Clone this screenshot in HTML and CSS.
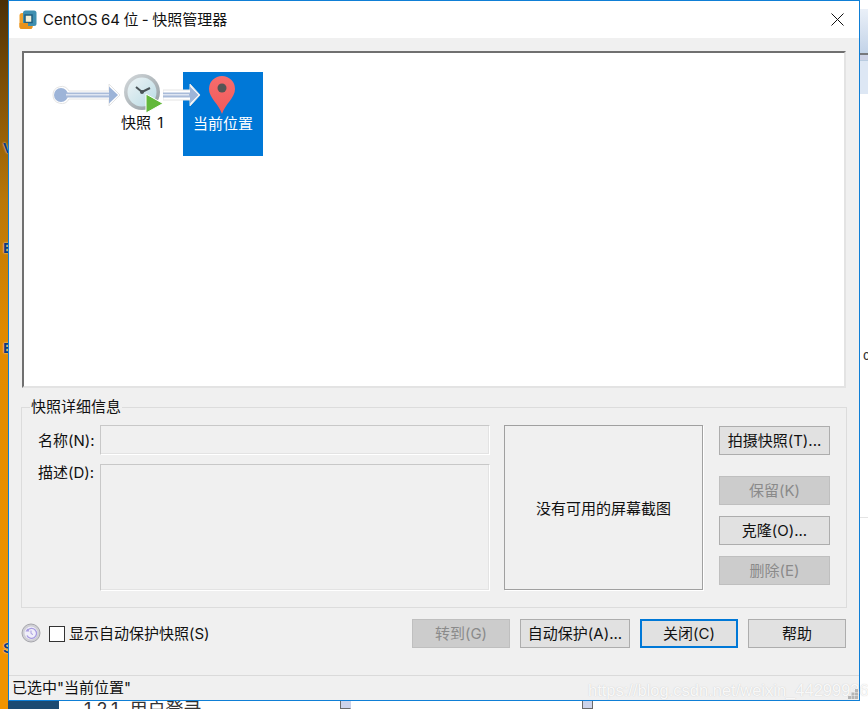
FILE: index.html
```html
<!DOCTYPE html>
<html lang="zh">
<head>
<meta charset="utf-8">
<title>CentOS 64 位 - 快照管理器</title>
<link rel="stylesheet" href="styles.css">
</head>
<body>
<div class="desk">
  <div class="desk-left">
    <span class="bg-letter l1">V</span><span class="bg-letter l2">E</span><span class="bg-letter l3">E</span><span class="bg-letter l4">S</span>
  </div>
  <div class="desk-right">
    <div class="tab"></div><div class="tab-line"></div><div class="tab-sub"></div>
    <span class="r-c">c</span><div class="r-line"></div>
  </div>
  <div class="desk-bottom">
    <div class="db-dark"></div>
    <div class="db-text">1.2.1 用户登录</div>
    <div class="db-bar a"></div><div class="db-bar b"></div>
  </div>

  <main class="win">
    <header class="titlebar">
      <svg class="logo" width="18" height="20" viewBox="0 0 18 20">
        <rect x="0.500" y="3" width="13" height="16" rx="2.500" fill="#f2a02a"/>
        <rect x="4" y="0.500" width="13.500" height="15.500" rx="2.500" fill="#3f8fb0"/>
        <rect x="6" y="5" width="7" height="7.500" fill="#f4f0d8" stroke="#1f5f80" stroke-width="1.500"/>
        <path d="M0.500 13H9v3h4.500v.5a2.500 2.500 0 0 1-2.500 2.500H3a2.500 2.500 0 0 1-2.500-2.500z" fill="#e8921c"/>
      </svg>
      <span class="title">CentOS 64 位 - 快照管理器</span>
      <svg class="close" width="13" height="13" viewBox="0 0 13 13"><path d="M.5.500l12 12M12.500.500l-12 12" stroke="#111" stroke-width="1" fill="none"/></svg>
    </header>
    <div class="body">
      <section class="tree">
        <div class="tree-row">
          <svg class="start-arrow" width="70" height="26" viewBox="0 0 70 26">
            <path d="M1 13a8.500 8.500 0 0 1 16-4h40V2l11 11-11 11v-7H17a8.500 8.500 0 0 1-16-4z" fill="#fff" stroke="#e4e4e4"/>
            <circle cx="9" cy="13" r="7" fill="#9db4d8"/>
            <rect x="14" y="10.500" width="46" height="5" fill="#a9bbd9"/>
            <rect x="14" y="12" width="44" height="1.500" fill="#dfe6f2"/>
            <path d="M57 4.500l9 8.500-9 8.500z" fill="#9db4d8"/>
          </svg>
          <div class="node">
            <svg class="clock" width="40" height="40" viewBox="0 0 40 40">
              <defs>
                <linearGradient id="cg" x1="0" y1="0" x2="1" y2="1"><stop offset="0" stop-color="#eef4f6"/><stop offset="1" stop-color="#b9dbe4"/></linearGradient>
                <linearGradient id="rg" x1="0" y1="0" x2="1" y2="1"><stop offset="0" stop-color="#d5dadd"/><stop offset="1" stop-color="#8f999e"/></linearGradient>
              </defs>
              <circle cx="18" cy="18" r="18" fill="url(#rg)"/>
              <circle cx="18" cy="18" r="14.500" fill="url(#cg)"/>
              <path d="M18 18l-6-5M18 18l8-4" stroke="#4a5357" stroke-width="2" fill="none"/>
              <circle cx="18" cy="18" r="2" fill="#4a5357"/>
              <path d="M22 20l17 9.500-17 9.500z" fill="#62b83a" stroke="#fff" stroke-width="1"/>
            </svg>
            <span class="node-label">快照 1</span>
          </div>
          <svg class="next-arrow" width="38" height="26" viewBox="0 0 38 26">
            <path d="M0 8h27V2l10 11-10 11v-6H0z" fill="#fff" stroke="#e4e4e4"/>
            <rect x="0" y="10.500" width="28" height="5" fill="#a9bbd9"/>
            <rect x="0" y="12" width="26" height="1.500" fill="#dfe6f2"/>
            <path d="M27 4.500l8.500 8.500-8.500 8.500z" fill="#9db4d8"/>
          </svg>
          <div class="current">
            <svg class="pin" width="28" height="38" viewBox="0 0 28 38">
              <defs><linearGradient id="pg" x1="0" y1="0" x2="0" y2="1"><stop offset="0" stop-color="#f76d6d"/><stop offset="1" stop-color="#f25a5a"/></linearGradient></defs>
              <path d="M14 38C11 28 1 22 1 13a13 13 0 0 1 26 0c0 9-10 15-13 25z" fill="url(#pg)"/>
              <circle cx="14" cy="12" r="4.500" fill="#555"/>
            </svg>
            <span class="current-label">当前位置</span>
          </div>
        </div>
      </section>

      <fieldset class="details">
        <legend class="legend">快照详细信息</legend>
        <div class="details-grid">
          <div class="fields">
            <div class="field-row"><span class="lbl lbl-name">名称(N):</span><div class="inp name"></div></div>
            <div class="field-row"><span class="lbl">描述(D):</span><div class="inp desc"></div></div>
          </div>
          <div class="shot">没有可用的屏幕截图</div>
          <div class="side">
            <button class="btn wide">拍摄快照(T)...</button>
            <button class="btn wide off gap-big">保留(K)</button>
            <button class="btn wide">克隆(O)...</button>
            <button class="btn wide off">删除(E)</button>
          </div>
        </div>
      </fieldset>

      <div class="foot">
        <svg class="restore" width="20" height="20" viewBox="0 0 20 20">
          <circle cx="10" cy="10" r="9" fill="#cfcfd4" stroke="#a6a6ac"/>
          <circle cx="10" cy="10" r="6.500" fill="#f0eff9"/>
          <path d="M6.500 7.500a5 5 0 1 1-.5 5" fill="none" stroke="#a79be0" stroke-width="1.300"/>
          <path d="M4.500 8.500h4L6.500 5.500z" fill="#a79be0"/>
          <path d="M10 7.500v3l2 1" fill="none" stroke="#a79be0"/>
        </svg>
        <label class="check"><span class="box"></span>显示自动保护快照(S)</label>
        <div class="foot-btns">
          <button class="btn off b98">转到(G)</button>
          <button class="btn b110">自动保护(A)...</button>
          <button class="btn b98 focus">关闭(C)</button>
          <button class="btn b98">帮助</button>
        </div>
      </div>
    </div>
    <footer class="status">已选中"当前位置"</footer>
  </main>
  <div class="mark">https://blog.csdn.net/weixin_44299936</div>
  <svg class="grip" width="10" height="10" viewBox="0 0 10 10">
    <path d="M7 0h3v3H7zM3.500 3.500h3v3h-3zM7 3.500h3v3H7zM0 7h3v3H0zM3.500 7h3v3h-3zM7 7h3v3H7z" fill="#b5b5b5"/>
  </svg>
</div>
</body>
</html>
```
FILE: styles.css
```css
* { box-sizing: border-box; }
html, body { margin: 0; padding: 0; }
body { width: 868px; height: 709px; overflow: hidden; background: #fff; font-family: Inter, "Noto Sans CJK SC", "Liberation Sans", sans-serif; font-size: 15px; color: #111; }
.desk { position: relative; width: 868px; height: 709px; overflow: hidden; }
.desk-left { position: absolute; left: 0; top: 0; width: 9px; height: 709px; background: linear-gradient(180deg, #4a2f06 0, #7a4d06 80px, #b97708 200px, #e08a00 330px, #f09400 640px, #f09400 100%); }
.bg-letter { position: absolute; left: 3px; color: #0b3b7a; font: bold 15px "Liberation Sans", sans-serif; text-shadow: 0 0 2px #fff; }
.l1 { top: 139px; } .l2 { top: 239px; } .l3 { top: 339px; } .l4 { top: 639px; }
.desk-right { position: absolute; left: 860px; top: 0; width: 8px; height: 709px; }
.tab { position: absolute; top: 9px; left: 0; width: 8px; height: 44px; background: linear-gradient(180deg, #eaf0f8, #c3d3e8); }
.tab-line { position: absolute; top: 53px; left: 0; width: 8px; height: 7px; background: linear-gradient(180deg, #77787c 0, #77787c 2px, #cdd2e6 2px); }
.tab-sub { position: absolute; top: 60px; left: 0; width: 8px; height: 34px; background: #dde7f4; border-top: 1px solid #b9cce0; }
.r-c { position: absolute; top: 347px; left: 3px; color: #333; font: 14px "Liberation Sans", sans-serif; }
.r-line { position: absolute; top: 517px; left: 0; width: 8px; height: 1px; background: #e4e4e4; }
.desk-bottom { position: absolute; left: 0; top: 701px; width: 868px; height: 8px; overflow: hidden; }
.db-dark { position: absolute; left: 8px; top: 0; width: 51px; height: 8px; background: #1b4a72; }
.db-text { position: absolute; left: 84px; top: -3px; font-size: 18px; line-height: 24px; word-spacing: 6px; color: #333; white-space: nowrap; }
.db-bar { position: absolute; top: 0; height: 8px; background: #ccd3ea; border: 1px solid #6a6a6a; border-top: 0; }
.db-bar.a { left: 340px; width: 11px; border-right-color: #ccd3ea; }
.db-bar.b { left: 582px; width: 11px; }

.win { position: absolute; left: 8px; top: 0; width: 852px; height: 701px; border: 1px solid #0f7fd6; background: #f0f0f0; display: flex; flex-direction: column; }
.titlebar { height: 37px; flex: none; background: #fff; display: flex; align-items: center; padding: 0 15px 0 10px; }
.logo { flex: none; margin-right: 6px; }
.title { flex: 1; font-size: 15px; line-height: 20px; word-spacing: -0.8px; }
.close { flex: none; }
.body { flex: 1; padding: 13px 13px 0 13px; display: flex; flex-direction: column; }
.tree { height: 337px; flex: none; background: #fff; border: 2px solid; border-color: #707070 #e3e3e3 #e3e3e3 #707070; padding: 19px 0 0 28px; }
.tree-row { display: flex; align-items: flex-start; }
.start-arrow { margin-top: 10px; flex: none; }
.node { width: 40px; flex: none; margin-left: 2px; position: relative; height: 60px; }
.clock { display: block; margin-top: 2px; }
.node-label { position: absolute; left: -3px; top: 41px; white-space: nowrap; font-size: 15px; line-height: 20px; word-spacing: 2px; }
.next-arrow { margin-top: 10px; margin-left: -1px; flex: none; position: relative; z-index: 1; }
.current { width: 80px; height: 84px; margin-left: -18px; background: #0078d7; color: #fff; display: flex; flex-direction: column; align-items: center; flex: none; }
.pin { margin: 4px 3px 0 0; flex: none; }
.current-label { font-size: 15px; line-height: 20px; }

.details { margin: 19px 0 0 -1px; padding: 0; width: 826px; height: 201px; border: 1px solid #dcdcdc; position: relative; }
.legend { position: absolute; left: 8px; top: -10px; background: #f0f0f0; padding: 0 1px; font-size: 15px; line-height: 18px; }
.details-grid { display: flex; padding: 17px 0 0 16px; align-items: flex-start; }
.fields { width: 452px; flex: none; display: flex; flex-direction: column; gap: 9px; }
.field-row { display: flex; align-items: flex-start; }
.lbl { width: 62px; flex: none; line-height: 18px; white-space: nowrap; }
.lbl-name { padding-top: 7px; }
.inp { width: 390px; background: #f0f0f0; border: 1px solid; border-color: #c8c8c8 #fff #fff #c8c8c8; box-shadow: inset -1px -1px 0 #e3e3e3; }
.inp.name { height: 30px; }
.inp.desc { height: 127px; }
.shot { width: 199px; height: 165px; margin-left: 14px; flex: none; border: 1px solid #a0a0a0; box-shadow: 1px 1px 0 #fff; display: flex; align-items: center; justify-content: center; font-size: 15px; }
.side { display: flex; flex-direction: column; gap: 11px; margin-left: 16px; padding-top: 1px; }
.btn { font-family: inherit; font-size: 15px; line-height: 20px; color: #111; height: 29px; padding: 0; background: #e1e1e1; border: 1px solid #adadad; display: block; white-space: nowrap; }
.wide { width: 111px; }
.gap-big { margin-top: 10px; }
.btn.off { background: #cccccc; border-color: #bfbfbf; color: #8a8a8a; }
.foot { height: 43px; flex: none; margin-top: 10px; margin-left: -1px; display: flex; align-items: flex-start; padding-top: 1px; }
.restore { flex: none; margin: 4px 8px 0 0; }
.check { display: flex; align-items: center; height: 29px; flex: none; line-height: 20px; }
.box { width: 16px; height: 16px; background: #fff; border: 1px solid #333; margin-right: 4px; }
.foot-btns { margin-left: auto; display: flex; gap: 10px; }
.b98 { width: 98px; }
.b110 { width: 110px; }
.btn.focus { border: 2px solid #0078d7; }
.status { height: 25px; flex: none; margin-top: auto; border-top: 1px solid #dadada; line-height: 24px; padding-left: 3px; font-size: 15px; }
.mark { position: absolute; left: 588px; top: 680px; font: 16.500px/20px "Liberation Sans", sans-serif; color: rgba(255,255,255,.9); text-shadow: 0 0 1px rgba(150,150,150,.5); white-space: nowrap; }
.grip { position: absolute; left: 848px; top: 689px; }
```
